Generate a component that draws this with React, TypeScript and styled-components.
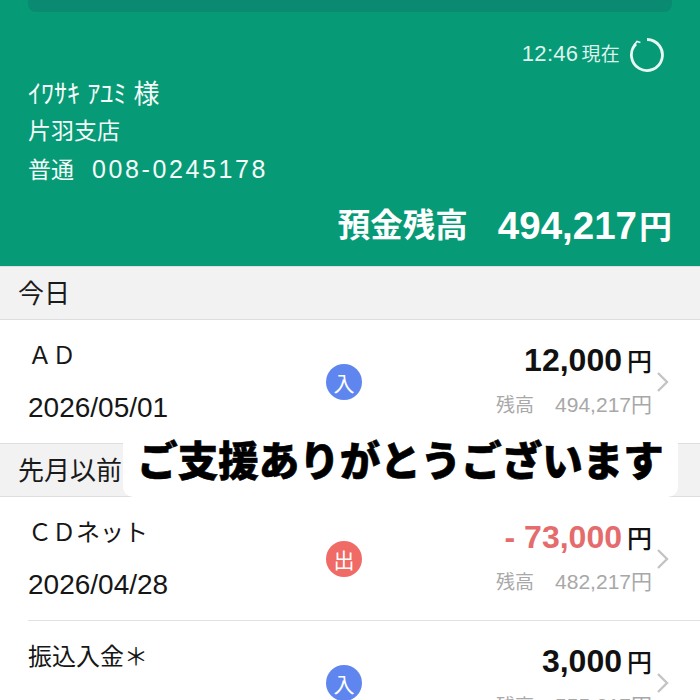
import React from "react";
import styled, { createGlobalStyle } from "styled-components";

const GlobalStyle = createGlobalStyle`
  html, body {
    margin: 0;
    padding: 0;
    height: 700px;
    overflow: hidden;
    background: #fff;
  }
`;

type Tx = {
  name: string;
  date: string;
  kind: "in" | "out";
  amount: string;
  balance: string;
};

const today: Tx[] = [
  { name: "ＡＤ", date: "2026/05/01", kind: "in", amount: "12,000", balance: "494,217" },
];

const earlier: Tx[] = [
  { name: "ＣＤネット", date: "2026/04/28", kind: "out", amount: "- 73,000", balance: "482,217" },
  // date of this row is below the fold in the screenshot
  { name: "振込入金＊", date: "", kind: "in", amount: "3,000", balance: "555,217" },
];

const Row: React.FC<{ tx: Tx }> = ({ tx }) => (
  <RowWrap>
    <LeftCol>
      <Name>{tx.name}</Name>
      <DateText>{tx.date}</DateText>
    </LeftCol>
    <Badge $kind={tx.kind}>{tx.kind === "in" ? "入" : "出"}</Badge>
    <RightCol>
      <Amount>
        <AmountNum $kind={tx.kind}>{tx.amount}</AmountNum>
        <Yen>円</Yen>
      </Amount>
      <Balance>
        <BalanceLabel>残高</BalanceLabel>
        <span>{tx.balance}円</span>
      </Balance>
    </RightCol>
    <Chevron viewBox="0 0 14 24">
      <path d="M2 3l9 9-9 9" fill="none" stroke="#c4c4c4" strokeWidth="2.4" />
    </Chevron>
  </RowWrap>
);

const App: React.FC = () => {
  return (
    <Page>
      <GlobalStyle />
      <Header>
        <TopBar />
        <TimeLine>
          <TimeText>
            12:46<small>現在</small>
          </TimeText>
          <svg width="36" height="36" viewBox="0 0 36 36">
            <path
              d="M18 2.5A15.5 15.5 0 1 1 7 7"
              fill="none"
              stroke="#e8f7f2"
              strokeWidth="2.8"
            />
            <path d="M4.8 8.4L8 4.4l3.4 1" fill="none" stroke="#e8f7f2" strokeWidth="1.6" />
          </svg>
        </TimeLine>
        <AccountName>ｲﾜｻｷ ｱﾕﾐ 様</AccountName>
        <AccountLine>片羽支店</AccountLine>
        <AccountLine>
          普通<AccountNo>008-0245178</AccountNo>
        </AccountLine>
        <Total>
          <TotalLabel>預金残高</TotalLabel>
          <TotalValue>
            494,217<TotalYen>円</TotalYen>
          </TotalValue>
        </Total>
      </Header>
      <SectionHead>今日</SectionHead>
      {today.map((tx) => (
        <Row key={tx.name} tx={tx} />
      ))}
      <SectionHead $overlap>先月以前</SectionHead>
      {earlier.map((tx) => (
        <Row key={tx.name} tx={tx} />
      ))}
      <Thanks>ご支援ありがとうございます</Thanks>
    </Page>
  );
};

const font = `"Liberation Sans", "Noto Sans CJK JP", sans-serif`;

const Page = styled.div`
  position: relative;
  width: 700px;
  height: 700px;
  overflow: hidden;
  font-family: ${font};
  background: #fff;
`;

const Header = styled.header`
  height: 266px;
  box-sizing: border-box;
  padding: 0 28px;
  background: #079a76;
  color: #f4fbf8;
  display: flex;
  flex-direction: column;
`;

const TopBar = styled.div`
  height: 12px;
  background: #0a8a70;
  border-radius: 0 0 8px 8px;
`;

const TimeLine = styled.div`
  display: flex;
  justify-content: flex-end;
  align-items: center;
  gap: 9px;
  height: 36px;
  margin-top: 25px;
  padding-right: 7px;
  color: #dff2ec;
`;

const TimeText = styled.span`
  padding-bottom: 4px;
  font-size: 22px;
  letter-spacing: 0.3px;

  small {
    margin-left: 3px;
    font-size: 19px;
  }
`;

const AccountName = styled.div`
  font-size: 26px;
  line-height: 36px;
  margin-top: 3px;
`;

const AccountLine = styled.div`
  font-size: 23px;
  line-height: 38px;
`;

const AccountNo = styled.span`
  margin-left: 18px;
  font-size: 25px;
  letter-spacing: 2.6px;
`;

const Total = styled.div`
  display: flex;
  justify-content: flex-end;
  gap: 30px;
  margin-top: 14px;
  line-height: 46px;
  font-weight: 700;
  color: #fff;
`;

const TotalLabel = styled.span`
  font-size: 32.5px;
`;

const TotalValue = styled.span`
  font-size: 38.5px;
`;

const TotalYen = styled.span`
  margin-left: 2px;
  font-size: 33px;
`;

const SectionHead = styled.div<{ $overlap?: boolean }>`
  height: 54px;
  box-sizing: border-box;
  margin-top: ${(p) => (p.$overlap ? "-1px" : "0")};
  padding: 0 0 3px 18px;
  background: #f2f2f2;
  border-top: 1px solid #dedede;
  border-bottom: 1px solid #dedede;
  display: flex;
  align-items: center;
  font-size: 26px;
  color: #1a1a1a;
`;

const RowWrap = styled.div`
  height: 124px;
  box-sizing: border-box;
  margin-left: 28px;
  padding-right: 30px;
  display: grid;
  grid-template-columns: 298px 36px 1fr 18px;
  align-items: center;
  border-bottom: 1px solid #e2e2e2;
`;

const LeftCol = styled.div`
  display: flex;
  flex-direction: column;
  gap: 16px;
  color: #161616;
`;

const Name = styled.div`
  font-size: 24px;
  line-height: 36px;
`;

const DateText = styled.div`
  min-height: 36px;
  font-size: 28px;
  line-height: 36px;
`;

const Badge = styled.div<{ $kind: "in" | "out" }>`
  width: 36px;
  height: 36px;
  border-radius: 50%;
  background: ${(p) => (p.$kind === "in" ? "#5f86ef" : "#f06a66")};
  color: #fff;
  font-size: 21px;
  display: flex;
  align-items: center;
  justify-content: center;
`;

const RightCol = styled.div`
  display: flex;
  flex-direction: column;
  align-items: flex-end;
  gap: 8px;
  margin-top: -2px;
`;

const Amount = styled.div`
  display: flex;
  align-items: baseline;
  gap: 5px;
  font-size: 32px;
  line-height: 40px;
  font-weight: 700;
  color: #111;
`;

const AmountNum = styled.span<{ $kind: "in" | "out" }>`
  color: ${(p) => (p.$kind === "out" ? "#e56c6c" : "#111")};
`;

const Yen = styled.span`
  font-size: 25px;
  font-weight: 500;
`;

const Balance = styled.div`
  display: flex;
  align-items: baseline;
  gap: 21px;
  font-size: 21px;
  line-height: 30px;
  color: #a8a8a8;
`;

const BalanceLabel = styled.span`
  font-size: 19px;
`;

const Chevron = styled.svg`
  width: 14px;
  height: 24px;
  justify-self: end;
`;

const Thanks = styled.div`
  position: absolute;
  left: 123px;
  top: 440px;
  width: 555px;
  height: 57px;
  box-sizing: border-box;
  padding-bottom: 20px;
  background: #fff;
  border-radius: 0 0 10px 10px;
  display: flex;
  align-items: center;
  justify-content: center;
  font-size: 40.5px;
  font-weight: 900;
  -webkit-text-stroke: 0.6px #000;
  color: #000;
  white-space: nowrap;
`;

export default App;
